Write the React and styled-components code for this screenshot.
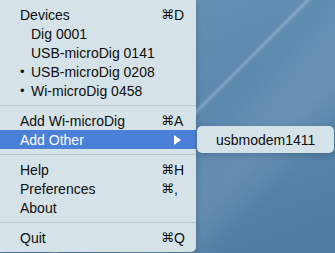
import React from "react";
import styled, { createGlobalStyle } from "styled-components";

const Global = createGlobalStyle`
  html, body { margin: 0; padding: 0; overflow: hidden; }
  body { font-family: "Liberation Sans", Arial, sans-serif; }
`;

const Desktop = styled.div`
  width: 335px;
  height: 253px;
  display: flex;
  align-items: flex-start;
  background:
    linear-gradient(135deg,
      rgba(255,255,255,0) 51.6%,
      rgba(255,255,255,0.22) 52.4%,
      rgba(255,255,255,0) 53.2%),
    linear-gradient(135deg,
      rgba(255,255,255,0) 56%,
      rgba(255,255,255,0.07) 64%,
      rgba(255,255,255,0.09) 70%,
      rgba(255,255,255,0) 80%),
    linear-gradient(160deg, #6b95b8 0%, #5d89af 45%, #4f7ba1 100%);
`;

const Menu = styled.div`
  width: 196px;
  padding: 5px 0 5px;
  background: rgb(213, 227, 233);
  border-bottom-right-radius: 5px;
  box-shadow: 0 2px 6px rgba(0, 0, 0, 0.18);
  color: #0e0e0e;
  font-size: 14px;
`;

const Row = styled.div`
  position: relative;
  display: grid;
  grid-template-columns: 1fr 35px;
  align-items: center;
  height: 19px;
  padding-left: 20px;
  background: ${(p) => (p.$active ? "#4a80d8" : "transparent")};
  color: ${(p) => (p.$active ? "#ffffff" : "inherit")};
  white-space: nowrap;
`;

const Label = styled.span`
  display: flex;
  align-items: center;
`;

const Mark = styled.span`
  display: inline-block;
  width: 11px;
  font-size: 13px;
  line-height: 1;
`;

const Shortcut = styled.span`
  display: flex;
  align-items: center;
`;

const Cmd = styled.span`
  display: inline-block;
  width: 13px;
  font-family: "DejaVu Sans", sans-serif;
  font-size: 13px;
`;

const Arrow = styled.svg`
  display: block;
  margin-left: 13px;
`;

const Separator = styled.div`
  height: 11px;
  display: flex;
  align-items: center;
  &::after {
    content: "";
    display: block;
    width: 100%;
    height: 1px;
    background: rgb(186, 201, 208);
  }
`;

const Submenu = styled.div`
  position: absolute;
  left: calc(100% + 1px);
  top: -4px;
  width: 137px;
  height: 27px;
  box-sizing: border-box;
  padding-left: 19px;
  display: flex;
  align-items: center;
  background: rgb(213, 227, 233);
  border-radius: 5px;
  box-shadow: 0 2px 6px rgba(0, 0, 0, 0.18);
  color: #0e0e0e;
`;

function Item({ label, mark, shortcut, active, arrow, children }) {
  return (
    <Row $active={active}>
      <Label>
        {mark !== undefined && <Mark>{mark}</Mark>}
        {label}
      </Label>
      <Shortcut>
        {shortcut && (
          <>
            <Cmd>⌘</Cmd>
            {shortcut}
          </>
        )}
        {arrow && (
          <Arrow width="7" height="10" viewBox="0 0 7 10">
            <polygon points="0,0 7,5 0,10" fill="currentColor" />
          </Arrow>
        )}
      </Shortcut>
      {children}
    </Row>
  );
}

export default function App() {
  return (
    <>
      <Global />
      <Desktop>
        <Menu>
          <Item label="Devices" shortcut="D" />
          <Item label="Dig 0001" mark="" />
          <Item label="USB-microDig 0141" mark="" />
          <Item label="USB-microDig 0208" mark="•" />
          <Item label="Wi-microDig 0458" mark="•" />
          <Separator />
          <Item label="Add Wi-microDig" shortcut="A" />
          <Item label="Add Other" active arrow>
            <Submenu>usbmodem1411</Submenu>
          </Item>
          <Separator />
          <Item label="Help" shortcut="H" />
          <Item label="Preferences" shortcut="," />
          <Item label="About" />
          <Separator />
          <Item label="Quit" shortcut="Q" />
        </Menu>
      </Desktop>
    </>
  );
}
